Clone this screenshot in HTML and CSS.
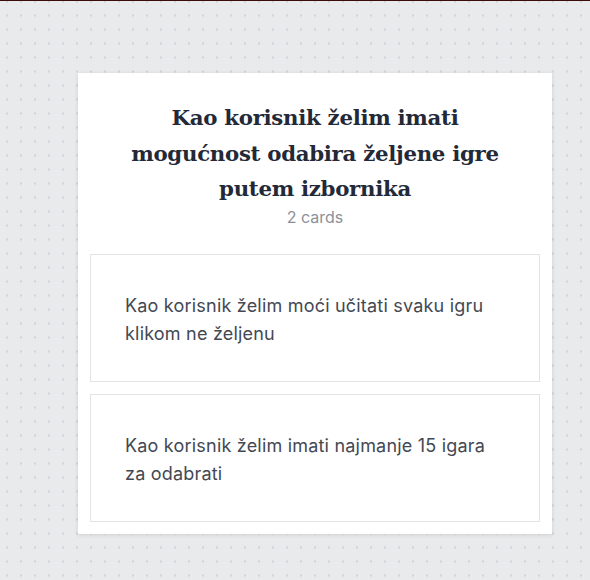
FILE: index.html
```html
<!DOCTYPE html>
<html lang="hr">
<head>
<meta charset="utf-8">
<title>Deck</title>
<link rel="stylesheet" href="styles.css">
</head>
<body>
<div class="topline"></div>
<main class="canvas">
  <section class="deck">
    <header class="deck-head">
      <h1 class="deck-title">Kao korisnik želim imati mogućnost odabira željene igre putem izbornika</h1>
      <p class="deck-count">2 cards</p>
    </header>
    <div class="deck-cards">
      <article class="story">
        <p class="story-text">Kao korisnik želim moći učitati svaku igru klikom ne željenu</p>
      </article>
      <article class="story">
        <p class="story-text">Kao korisnik želim imati najmanje 15 igara za odabrati</p>
      </article>
    </div>
  </section>
</main>
</body>
</html>
```

FILE: styles.css
```css
html, body {
  margin: 0;
  padding: 0;
}
body {
  min-height: 580px;
  background-color: #e9eaec;
  background-image: radial-gradient(circle at 7px 7px, #d2d4d8 0, #d2d4d8 1px, rgba(210,212,216,0) 1.6px);
  background-size: 14px 14px;
  background-position: 0 -5.5px;
  font-family: Inter, "Noto Sans", sans-serif;
}
.topline {
  height: 1px;
  background: #3b0c0c;
}
.canvas {
  display: flex;
  padding: 72px 0 0 78px;
}
.deck {
  width: 474px;
  box-sizing: border-box;
  background: #ffffff;
  padding: 0 12px 12px;
  box-shadow: 0 1px 4px rgba(0, 0, 0, 0.12);
}
.deck-head {
  text-align: center;
  padding: 27px 0 0;
}
.deck-title {
  margin: 0 auto;
  max-width: 388px;
  font-family: "DejaVu Serif", "Liberation Serif", serif;
  font-weight: 700;
  font-size: 21.3px;
  line-height: 35.5px;
  color: #242938;
  letter-spacing: -0.3px;
}
.deck-count {
  margin: 0;
  font-size: 16px;
  line-height: 20px;
  color: #8c9099;
}
.deck-cards {
  display: flex;
  flex-direction: column;
  gap: 12px;
  margin-top: 27px;
}
.story {
  border: 1px solid #e2e3e6;
  height: 128px;
  box-sizing: border-box;
  display: flex;
  align-items: center;
  padding: 4px 34px 0;
}
.story-text {
  margin: 0;
  font-size: 18px;
  line-height: 28px;
  letter-spacing: 0.2px;
  color: #434853;
}
```
